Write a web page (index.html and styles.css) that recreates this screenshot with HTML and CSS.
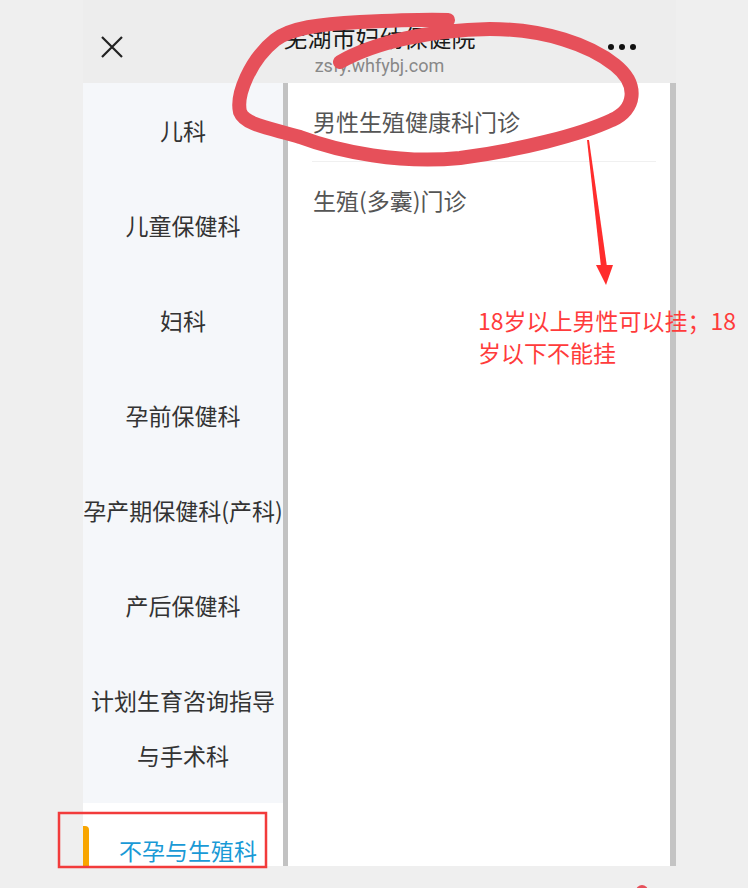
FILE: index.html
```html
<!DOCTYPE html>
<html lang="zh-CN">
<head>
    <meta charset="UTF-8">
    <meta name="viewport" content="width=device-width, initial-scale=1.0">
    <title>芜湖市妇幼保健院</title>
    <link rel="stylesheet" href="styles.css">
</head>
<body>
    <div class="phone">
        <div class="topbar">
            <div class="topbar-close">
                <svg width="22" height="22" viewBox="0 0 22 22">
                    <path d="M1 1 L21 21 M21 1 L1 21" stroke="#222" stroke-width="2.2" fill="none"/>
                </svg>
            </div>
            <div class="topbar-title">
                <div class="title">芜湖市妇幼保健院</div>
                <div class="url">zsfy.whfybj.com</div>
            </div>
            <div class="topbar-more">
                <span class="dot"></span><span class="dot"></span><span class="dot"></span>
            </div>
        </div>

        <div class="main">
            <ul class="sidebar">
                <li class="dept">儿科</li>
                <li class="dept">儿童保健科</li>
                <li class="dept">妇科</li>
                <li class="dept">孕前保健科</li>
                <li class="dept">孕产期保健科(产科)</li>
                <li class="dept">产后保健科</li>
                <li class="dept">计划生育咨询指导<br>与手术科</li>
                <li class="dept dept-active">不孕与生殖科</li>
            </ul>
            <div class="content">
                <div class="clinic">男性生殖健康科门诊</div>
                <div class="clinic clinic-last">生殖(多囊)门诊</div>
            </div>
        </div>
    </div>

    <!-- 标注 -->
    <svg class="marks" width="748" height="888" viewBox="0 0 748 888">
        <path d="M340 62 C 375 42, 430 30, 490 29 C 545 29, 590 45, 615 65 C 640 85, 635 110, 612 120 C 580 135, 520 150, 460 158 C 400 164, 340 152, 300 137 C 270 128, 245 125, 240 112 C 236 95, 250 60, 275 40 C 290 28, 320 24, 360 22 C 400 20, 430 19, 448 20"
              fill="none" stroke="#e6505a" stroke-width="14" stroke-linecap="round" stroke-linejoin="round"/>
        <polygon points="587,140 589,140 607,267 601,267" fill="#ff2d2d"/>
        <polygon points="596,265 613,265 606,285" fill="#ff2d2d"/>
        <rect x="59" y="813" width="207" height="54" fill="none" stroke="#f23b3b" stroke-width="2.5"/>
        <circle cx="642" cy="891" r="6" fill="#e6505a"/>
    </svg>
    <div class="note">18岁以上男性可以挂；18<br>岁以下不能挂</div>
</body>
</html>
```

FILE: styles.css
```css
body {
    margin: 0;
    width: 748px;
    height: 888px;
    overflow: hidden;
    background-color: #efefef;
    font-family: "Noto Sans CJK SC", "Noto Sans", sans-serif;
    position: relative;
}

.phone {
    margin-left: 83px;
    width: 593px;
    height: 866px;
    overflow: hidden;
    display: flex;
    flex-direction: column;
}

.topbar {
    height: 83px;
    flex-shrink: 0;
    background-color: #ededed;
    display: grid;
    grid-template-columns: 56px 1fr 80px;
    align-items: center;
}

.topbar-close {
    display: flex;
    justify-content: center;
    padding-left: 1px;
    margin-top: 10px;
}

.topbar-title {
    text-align: center;
    margin-top: 16px;
    margin-left: 24px;
}

.title {
    font-size: 24px;
    line-height: 28px;
    color: #1a1a1a;
}

.url {
    margin-top: 4px;
    font-family: "Roboto", "Noto Sans", sans-serif;
    font-size: 18px;
    line-height: 22px;
    color: #888;
}

.topbar-more {
    display: flex;
    gap: 5px;
    justify-content: flex-start;
    padding-left: 12px;
    margin-top: 10px;
}

.dot {
    width: 6px;
    height: 6px;
    border-radius: 50%;
    background-color: #111;
}

.main {
    flex: 1;
    display: flex;
    min-height: 0;
}

.sidebar {
    list-style: none;
    margin: 0;
    padding: 0;
    width: 200px;
    flex-shrink: 0;
    background-color: #f5f7fa;
    border-right: 5px solid #c2c2c2;
}

.dept {
    padding: 20px 0;
    line-height: 55px;
    font-size: 23px;
    color: #333;
    text-align: center;
    white-space: nowrap;
}

.dept-active {
    position: relative;
    background-color: #fff;
    color: #1a9ad6;
    padding-left: 10px;
}

.dept-active::before {
    content: "";
    position: absolute;
    left: 0;
    top: 23px;
    width: 6px;
    height: 50px;
    border-radius: 0 4px 4px 0;
    background-color: #f8a500;
}

.content {
    flex: 1;
    background-color: #fff;
    border-right: 6px solid #c4c4c4;
}

.clinic {
    margin: 0 14px 0 24px;
    padding-left: 1px;
    height: 78px;
    line-height: 77px;
    font-size: 23px;
    color: #555;
    border-bottom: 1px solid #f0f0f0;
}

.clinic-last {
    border-bottom: none;
}

.marks {
    position: absolute;
    left: 0;
    top: 0;
    pointer-events: none;
}

.note {
    position: absolute;
    left: 478px;
    top: 304px;
    font-size: 23px;
    line-height: 32px;
    color: #ff3b3b;
    white-space: nowrap;
}
```
